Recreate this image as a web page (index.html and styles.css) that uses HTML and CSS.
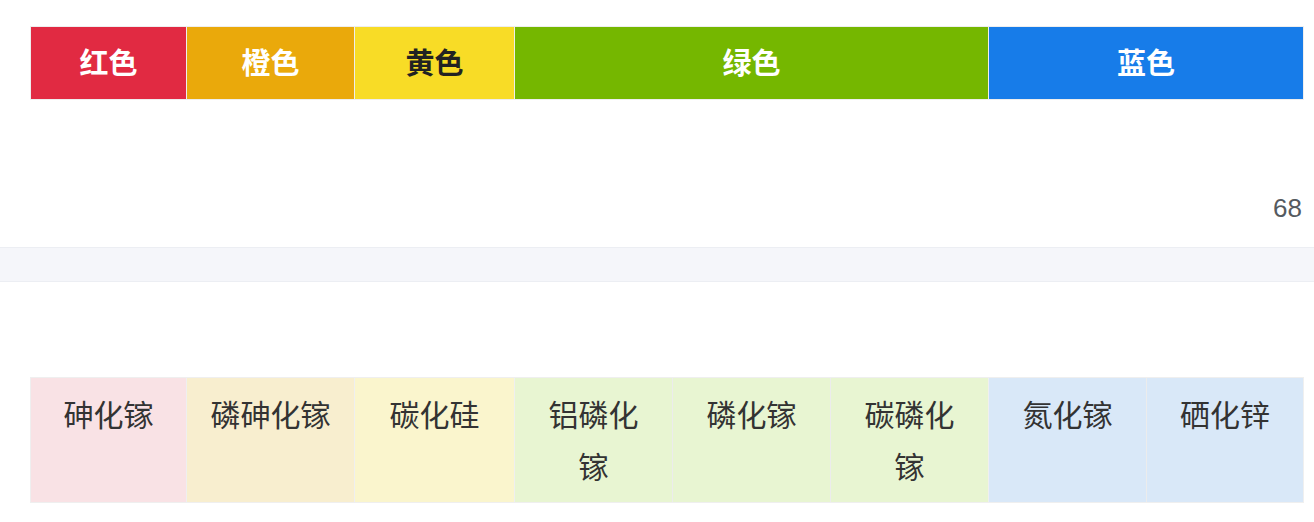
FILE: index.html
```html
<!DOCTYPE html>
<html lang="zh-CN">
<head>
<meta charset="utf-8">
<title>色彩与材料</title>
<link rel="stylesheet" href="styles.css">
</head>
<body>
<section class="top">
  <div class="bar">
    <div class="bar-cell red">红色</div>
    <div class="bar-cell orange">橙色</div>
    <div class="bar-cell yellow">黄色</div>
    <div class="bar-cell green span3">绿色</div>
    <div class="bar-cell blue span2">蓝色</div>
  </div>
  <div class="count-row"><span class="count">68</span></div>
</section>
<div class="band"></div>
<section class="bottom">
  <div class="materials">
    <div class="mat pink">砷化镓</div>
    <div class="mat cream">磷砷化镓</div>
    <div class="mat lemon">碳化硅</div>
    <div class="mat lime">铝磷化镓</div>
    <div class="mat lime">磷化镓</div>
    <div class="mat lime">碳磷化镓</div>
    <div class="mat sky">氮化镓</div>
    <div class="mat sky">硒化锌</div>
  </div>
</section>
</body>
</html>
```

FILE: styles.css
```css
html, body {
  margin: 0;
  padding: 0;
  background: #ffffff;
}

body {
  font-family: "Noto Sans CJK SC", "Noto Sans", sans-serif;
  width: 1314px;
  height: 522px;
  overflow: hidden;
}

.top {
  padding: 26px 10px 0 30px;
}

.bar,
.materials {
  display: grid;
  grid-template-columns: 155px 167px 159px 157px 157px 157px 157px 156px;
  gap: 1px;
  padding: 1px;
  width: 1272px;
}

.bar {
  background: #eeeeee;
}

.bar-cell {
  height: 72px;
  padding-bottom: 3px;
  box-sizing: border-box;
  display: flex;
  align-items: center;
  justify-content: center;
  font-size: 29px;
  font-weight: 700;
  color: #ffffff;
  line-height: 1;
}

.span3 { grid-column: span 3; }
.span2 { grid-column: span 2; }

.red { background: #e12a42; }
.orange { background: #eaa90b; }
.yellow { background: #f8dc26; color: #222222; }
.green { background: #75b700; }
.blue { background: #177ce9; }

.count-row {
  display: flex;
  justify-content: flex-end;
  margin-top: 93px;
  padding-right: 2px;
}

.count {
  font-family: "Liberation Sans", Arial, sans-serif;
  font-size: 26px;
  line-height: 30px;
  color: #555a60;
}

.band {
  margin-top: 24px;
  height: 33px;
  background: #f5f6fa;
  border-top: 1px solid #eceef3;
  border-bottom: 1px solid #eceef3;
}

.bottom {
  padding: 95px 10px 0 30px;
}

.materials {
  background: #efefef;
  row-gap: 0;
}

.mat {
  height: 124px;
  box-sizing: border-box;
  padding: 9px 20px 11px;
  text-align: center;
  font-size: 30px;
  line-height: 52px;
  color: #333333;
}

.pink { background: #f9e2e5; }
.cream { background: #f8eecf; }
.lemon { background: #faf5cd; }
.lime { background: #e8f5d2; }
.sky { background: #d9e8f8; }

.lime + .lime,
.sky + .sky {
  box-shadow: -1px 0 0 rgba(0, 0, 0, 0.01);
}
```
